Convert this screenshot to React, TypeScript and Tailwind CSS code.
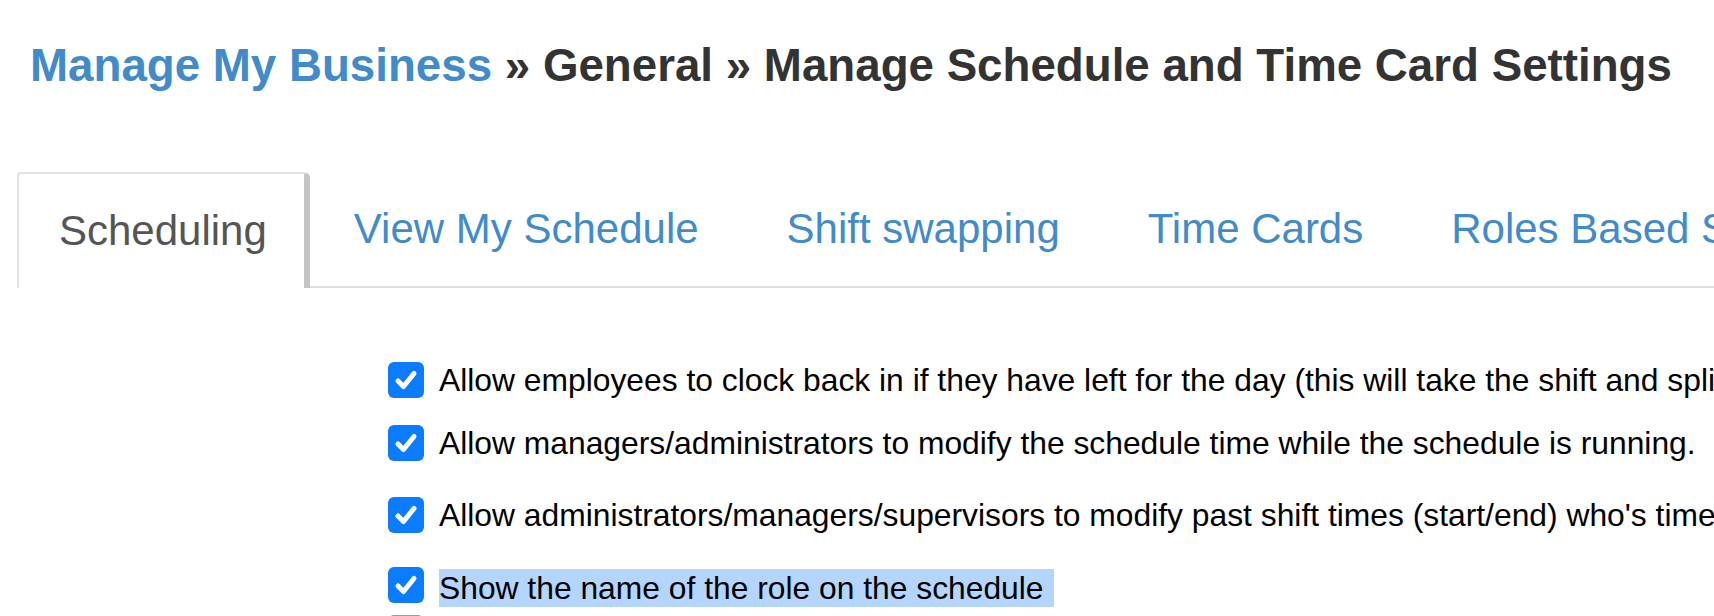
import React from "react";

type Setting = {
  label: string;
  checked: boolean;
  selected?: boolean;
  gap: string;
};

const tabs = [
  "Scheduling",
  "View My Schedule",
  "Shift swapping",
  "Time Cards",
  "Roles Based Scheduling",
];

const settings: Setting[] = [
  {
    label:
      "Allow employees to clock back in if they have left for the day (this will take the shift and split it into two shifts)",
    checked: true,
    gap: "mt-[74px]",
  },
  {
    label:
      "Allow managers/administrators to modify the schedule time while the schedule is running.",
    checked: true,
    gap: "mt-[27px]",
  },
  {
    label:
      "Allow administrators/managers/supervisors to modify past shift times (start/end) who's time card has been approved",
    checked: true,
    gap: "mt-[36px]",
  },
  {
    label: "Show the name of the role on the schedule",
    checked: true,
    selected: true,
    gap: "mt-[34px]",
  },
  {
    label: "Show employee notes on the schedule",
    checked: false,
    gap: "mt-[12px]",
  },
];

function CheckBox({ checked }: { checked: boolean }) {
  if (!checked) {
    return (
      <span className="block h-[36px] w-[36px] shrink-0 rounded-[6px] border-2 border-[#9b9ba1] bg-white" />
    );
  }
  return (
    <span className="flex h-[36px] w-[36px] shrink-0 items-center justify-center rounded-[6px] bg-[#0b7bff]">
      <svg viewBox="0 0 36 36" className="h-[36px] w-[36px]">
        <path
          d="M10 19 L15.5 24.5 L26 11.5"
          fill="none"
          stroke="#fff"
          strokeWidth="5"
          strokeLinecap="round"
          strokeLinejoin="round"
        />
      </svg>
    </span>
  );
}

export default function App() {
  return (
    <div className="h-[616px] w-full overflow-hidden bg-white font-['Liberation_Sans',Arial,sans-serif] whitespace-nowrap">
      {/* === Breadcrumb heading === */}
      <h1 className="pl-[30px] pt-[43px] text-[45.7px] font-bold leading-none text-[#333]">
        <span className="text-[#428bca]">Manage My Business</span> » General
        » Manage Schedule and Time Card Settings
      </h1>

      {/* === Tabs === */}
      <div className="mt-[83px] ml-[17px] flex border-b-2 border-[#dddddd]">
        {tabs.map((tab, i) =>
          i === 0 ? (
            <div
              key={tab}
              className="-mb-[2px] flex h-[116px] items-center rounded-tl-[4px] rounded-tr-[6px] border-t-2 border-l-2 border-r-[6px] border-t-[#e2e2e2] border-l-[#e2e2e2] border-r-[#c4c4c4] bg-white pl-[40px] pr-[37px] text-[42px] text-[#555]"
            >
              {tab}
            </div>
          ) : (
            <div
              key={tab}
              className="flex h-[114px] items-center px-[44px] text-[42px] text-[#428bca]"
            >
              {tab}
            </div>
          )
        )}
      </div>

      {/* === Settings list === */}
      <div className="flex flex-col pl-[388px]">
        {settings.map((s) => (
          <label
            key={s.label}
            className={`${s.gap} flex h-[36px] items-center gap-[15px] text-[31.8px] text-black`}
          >
            <CheckBox checked={s.checked} />
            <span
              className={
                s.selected
                  ? "mt-[6px] bg-[#b4d6fe] pr-[10px] leading-[38px]"
                  : "leading-[38px]"
              }
            >
              {s.label}
            </span>
          </label>
        ))}
      </div>
    </div>
  );
}
